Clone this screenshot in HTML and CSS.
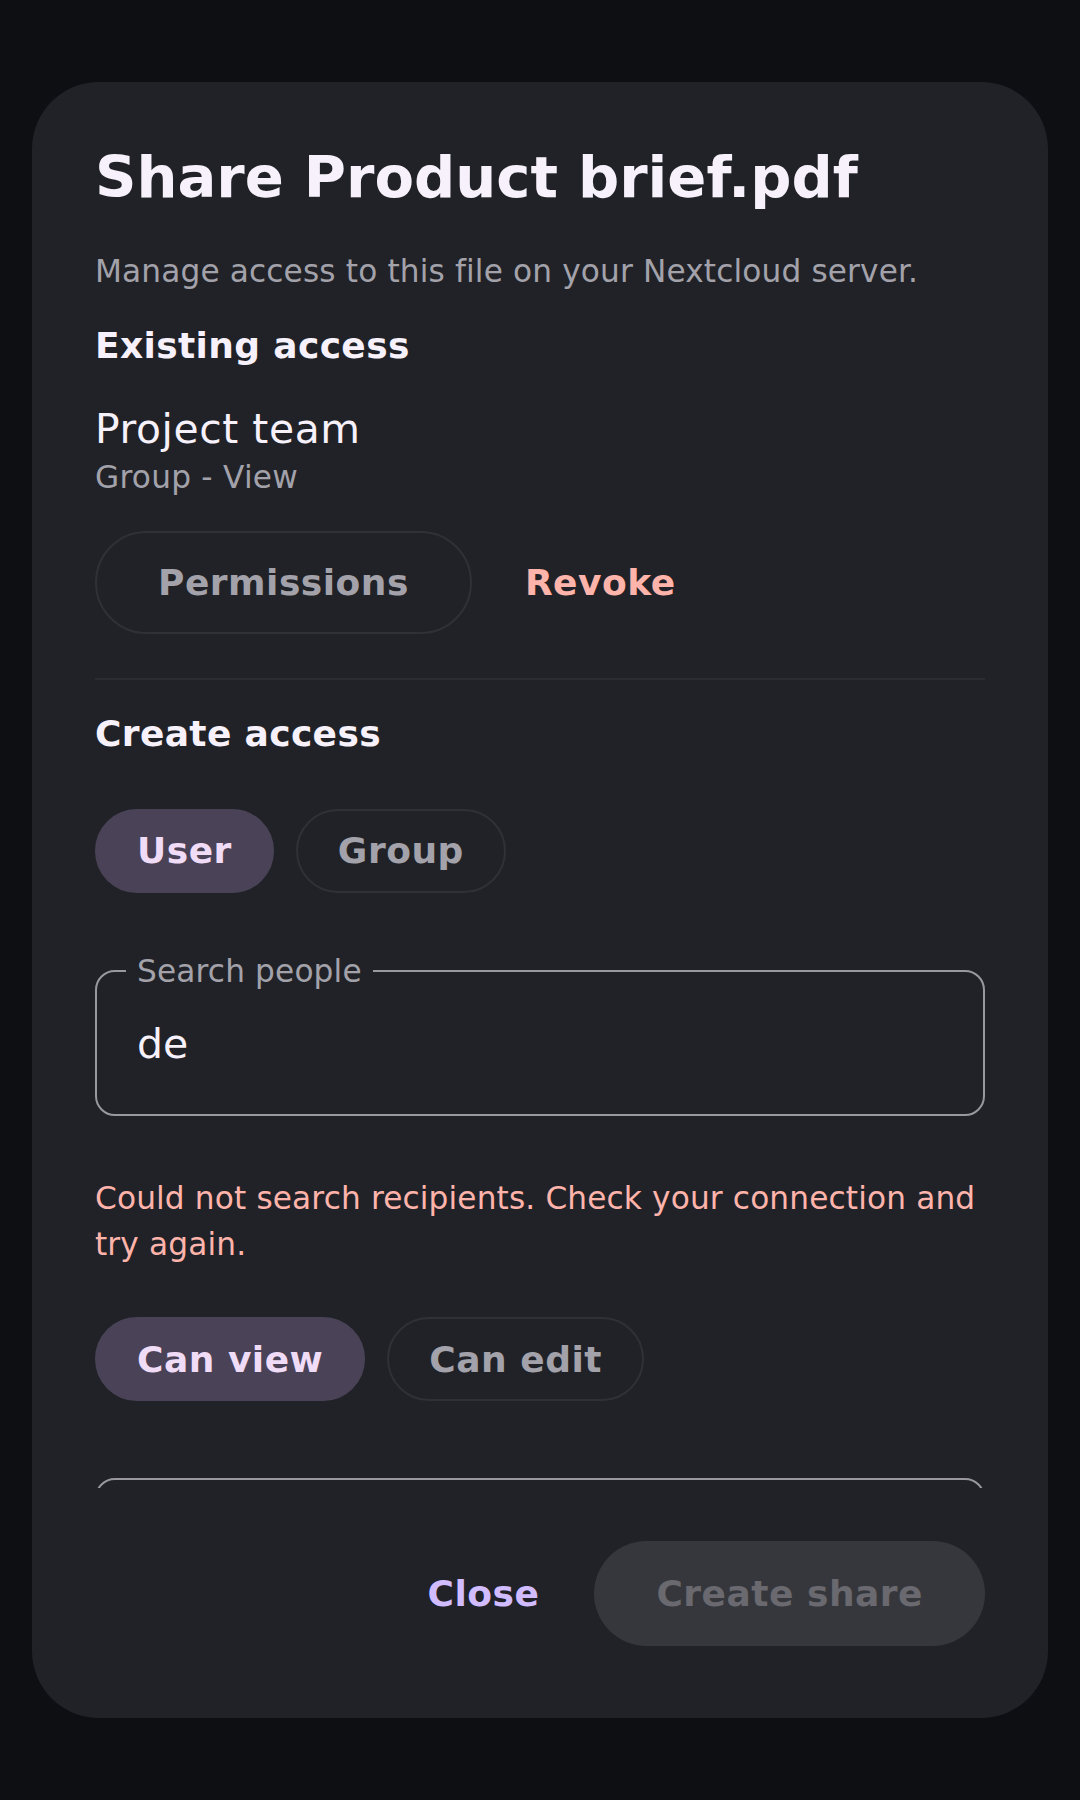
FILE: index.html
```html
<!DOCTYPE html>
<html lang="en">

<head>
    <meta charset="UTF-8">
    <meta name="viewport" content="width=device-width, initial-scale=1.0">
    <title>Share Product brief.pdf</title>
    <link rel="stylesheet" href="styles.css">
</head>

<body>
    <div class="dialog">
        <div class="dialog-body">
            <h1 class="title">Share Product brief.pdf</h1>
            <p class="subtitle">Manage access to this file on your Nextcloud server.</p>

            <h2 class="section">Existing access</h2>
            <div class="share-name">Project team</div>
            <div class="share-meta">Group - View</div>
            <div class="share-actions">
                <button class="btn btn-outline">Permissions</button>
                <button class="btn btn-text btn-danger">Revoke</button>
            </div>

            <div class="divider"></div>

            <h2 class="section section-create">Create access</h2>
            <div class="chips chips-type">
                <button class="chip chip-on">User</button>
                <button class="chip">Group</button>
            </div>

            <fieldset class="field">
                <legend>Search people</legend>
                <input type="text" value="de">
            </fieldset>

            <p class="error">Could not search recipients. Check your connection and try again.</p>

            <div class="chips chips-perm">
                <button class="chip chip-on">Can view</button>
                <button class="chip">Can edit</button>
            </div>

            <div class="field-plain"></div>
        </div>

        <div class="dialog-footer">
            <button class="btn btn-text btn-primary">Close</button>
            <button class="btn btn-filled" disabled>Create share</button>
        </div>
    </div>
</body>

</html>
```

FILE: styles.css
```css
body {
    margin: 0;
    background-color: #0e0f13;
    font-family: "DejaVu Sans", "Noto Sans", sans-serif;
    color: #f4eff6;
}

.dialog {
    box-sizing: border-box;
    margin: 82px 32px 0;
    height: 1636px;
    padding: 62px 63px 0;
    background-color: #212227;
    border-radius: 67px;
    display: flex;
    flex-direction: column;
}

.dialog-body {
    flex: 1;
    min-height: 0;
    overflow: hidden;
}

.title {
    margin: 0;
    font-size: 57.6px;
    line-height: 68px;
    font-weight: 700;
    color: #f6f1fa;
}

.subtitle {
    margin: 36px 0 0;
    font-size: 31.2px;
    line-height: 46.8px;
    letter-spacing: 0.14px;
    color: #a3a2ab;
}

.section {
    margin: 29px 0 0;
    font-size: 36px;
    line-height: 44px;
    font-weight: 700;
    letter-spacing: 0.36px;
    color: #f6f1fa;
}

.share-name {
    margin-top: 37px;
    font-size: 40.8px;
    line-height: 49px;
    letter-spacing: 0.6px;
    color: #f6f1fa;
}

.share-meta {
    font-size: 31.2px;
    line-height: 46.8px;
    letter-spacing: 0.25px;
    color: #a3a2ab;
}

.share-actions {
    margin-top: 30px;
    display: flex;
    gap: 22px;
}

/* buttons */
.btn {
    box-sizing: border-box;
    height: 104px;
    border: none;
    border-radius: 60px;
    background: none;
    font-family: inherit;
    font-size: 36px;
    font-weight: 700;
    letter-spacing: 0.5px;
    padding: 0 33px;
}

.btn-outline {
    height: 103px;
    padding: 0 61px;
    border: 2px solid #303137;
    color: #a3a2ab;
}

.btn-danger {
    padding: 0 31px;
    color: #ffb4ab;
}

.btn-primary {
    color: #d0bcff;
}

.btn-filled {
    height: 105px;
    padding: 0 62px;
    background-color: #36373c;
    color: #69696f;
}

.divider {
    margin-top: 43px;
    height: 2px;
    background-color: #2b2c31;
}

.section-create {
    margin-top: 32px;
}

.chips {
    display: flex;
    gap: 22px;
}

.chips-type {
    margin-top: 53px;
}

.chips-perm {
    margin-top: 49px;
}

.chip {
    box-sizing: border-box;
    height: 84px;
    padding: 0 40px;
    border: 2px solid #303137;
    border-radius: 42px;
    background: none;
    font-family: inherit;
    font-size: 36px;
    font-weight: 700;
    letter-spacing: 0.5px;
    color: #a3a2ab;
}

.chip-on {
    border-color: #4a4357;
    background-color: #4a4357;
    color: #f0dcf6;
}

/* outlined text field */
.field {
    margin: 59px 0 0;
    padding: 0 29px 24px;
    border: 2px solid #99989f;
    border-radius: 20px;
    min-width: 0;
}

.field legend {
    padding: 0 11px;
    font-size: 31.2px;
    line-height: 38px;
    letter-spacing: 0.15px;
    color: #a3a2ab;
}

.field input {
    box-sizing: border-box;
    display: block;
    width: 100%;
    height: 92px;
    margin-top: 8px;
    padding: 0 11px;
    border: none;
    outline: none;
    background: none;
    font-family: inherit;
    font-size: 41px;
    color: #f6f1fa;
}

.error {
    margin: 59px 0 0;
    font-size: 31.2px;
    line-height: 46.8px;
    letter-spacing: 0.14px;
    color: #ffb4ab;
}

.field-plain {
    margin-top: 77px;
    height: 140px;
    border: 2px solid #99989f;
    border-radius: 20px;
}

.dialog-footer {
    padding: 53px 0 72px;
    display: flex;
    justify-content: flex-end;
    align-items: center;
    gap: 22px;
}
```
